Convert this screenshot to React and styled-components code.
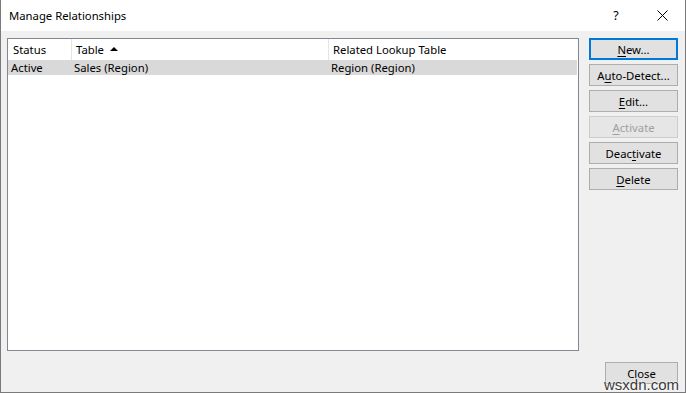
import React from "react";
import styled, { createGlobalStyle } from "styled-components";

const GlobalStyle = createGlobalStyle`
    html, body {
        margin: 0;
        padding: 0;
        background: #ffffff;
    }
    body {
        font-family: "Noto Sans", "Liberation Sans", sans-serif;
        font-size: 11.3px;
        color: #000000;
    }
`;

const Window = styled.div`
    position: relative;
    width: 686px;
    height: 393px;
    box-sizing: border-box;
    display: flex;
    flex-direction: column;
    background: #f0f0f0;
    border: 1px solid #7a7a7a;
    border-top: none;
    overflow: hidden;
`;

const TitleBar = styled.div`
    height: 31px;
    flex: none;
    display: flex;
    align-items: center;
    background: #ffffff;
    padding-left: 8px;
`;

const Title = styled.span`
    flex: 1;
    font-size: 11.3px;
    color: #000;
`;

const TitleButton = styled.div`
    width: ${p => p.$w}px;
    height: 31px;
    display: flex;
    align-items: center;
    justify-content: center;
    font-size: 12.5px;
    color: #000;
`;

const Body = styled.div`
    flex: 1;
    display: flex;
    flex-direction: column;
    padding: 7px 7px 0 6px;
`;

const Main = styled.div`
    display: flex;
    gap: 10px;
`;

const ListBox = styled.div`
    width: 572px;
    height: 313px;
    box-sizing: border-box;
    border: 1px solid #828790;
    background: #ffffff;
    display: flex;
    flex-direction: column;
`;

const Row = styled.div`
    display: grid;
    grid-template-columns: 63px 257px 1fr;
    height: ${p => p.$h}px;
    align-items: center;
    background: ${p => (p.$selected ? "#d9d9d9" : "transparent")};
    margin-right: ${p => (p.$selected ? "1px" : "0")};
`;

const HeadCell = styled.div`
    height: 100%;
    display: flex;
    align-items: center;
    gap: 6px;
    padding-left: ${p => (p.$first ? "5px" : "4px")};
    border-left: ${p => (p.$first ? "none" : "1px solid #e5e5e5")};
    box-sizing: border-box;
`;

const Cell = styled.div`
    padding-left: 3px;
    white-space: nowrap;
`;

const SortArrow = styled.span`
    width: 0;
    height: 0;
    border-left: 4px solid transparent;
    border-right: 4px solid transparent;
    border-bottom: 4px solid #000;
    margin-top: -1px;
`;

const ButtonColumn = styled.div`
    width: 89px;
    display: flex;
    flex-direction: column;
    gap: 4px;
`;

const Button = styled.div`
    height: 22px;
    width: ${p => (p.$w ? `${p.$w}px` : "100%")};
    box-sizing: border-box;
    display: flex;
    align-items: center;
    justify-content: center;
    white-space: nowrap;
    background: ${p => (p.$disabled ? "#e6e6e6" : "#e1e1e1")};
    border: ${p =>
        p.$default ? "2px solid #0078d7" : p.$disabled ? "1px solid #cdcdcd" : "1px solid #adadad"};
    color: ${p => (p.$disabled ? "#a0a0a0" : "#000")};
    font-size: 11.3px;
    u {
        text-decoration: underline;
        text-underline-offset: 2px;
    }
`;

const Footer = styled.div`
    display: flex;
    justify-content: flex-end;
    padding-top: 11px;
`;

const Watermark = styled.div`
    position: absolute;
    right: 6px;
    bottom: -1px;
    font-family: "Liberation Sans", sans-serif;
    font-size: 15px;
    color: #3a3a3a;
    text-shadow: 0 0 2px #fff, 0 0 2px #fff;
`;

const CloseIcon = () => (
    <svg width="11" height="11" viewBox="0 0 11 11">
        <path d="M0.5 0.5 L10.5 10.5 M10.5 0.5 L0.5 10.5" stroke="#000" strokeWidth="1" fill="none" />
    </svg>
);

const buttons = [
    { pre: "", key: "N", post: "ew...", def: true },
    { pre: "A", key: "u", post: "to-Detect..." },
    { pre: "", key: "E", post: "dit..." },
    { pre: "", key: "A", post: "ctivate", disabled: true },
    { pre: "Deac", key: "t", post: "ivate" },
    { pre: "", key: "D", post: "elete" },
];

const App = () => {
    return (
        <>
            <GlobalStyle />
            <Window>
                <TitleBar>
                    <Title>Manage Relationships</Title>
                    <TitleButton $w={46}>?</TitleButton>
                    <TitleButton $w={46}><CloseIcon /></TitleButton>
                </TitleBar>
                <Body>
                    <Main>
                        <ListBox>
                            <Row $h={21}>
                                <HeadCell $first>Status</HeadCell>
                                <HeadCell>Table <SortArrow /></HeadCell>
                                <HeadCell>Related Lookup Table</HeadCell>
                            </Row>
                            <Row $h={15} $selected>
                                <Cell>Active</Cell>
                                <Cell>Sales (Region)</Cell>
                                <Cell>Region (Region)</Cell>
                            </Row>
                        </ListBox>
                        <ButtonColumn>
                            {buttons.map((b, i) => (
                                <Button key={i} $default={b.def} $disabled={b.disabled}>
                                    {b.pre}<u>{b.key}</u>{b.post}
                                </Button>
                            ))}
                        </ButtonColumn>
                    </Main>
                    <Footer>
                        <Button $w={73}>Close</Button>
                    </Footer>
                </Body>
                <Watermark>wsxdn.com</Watermark>
            </Window>
        </>
    );
};

export default App;
